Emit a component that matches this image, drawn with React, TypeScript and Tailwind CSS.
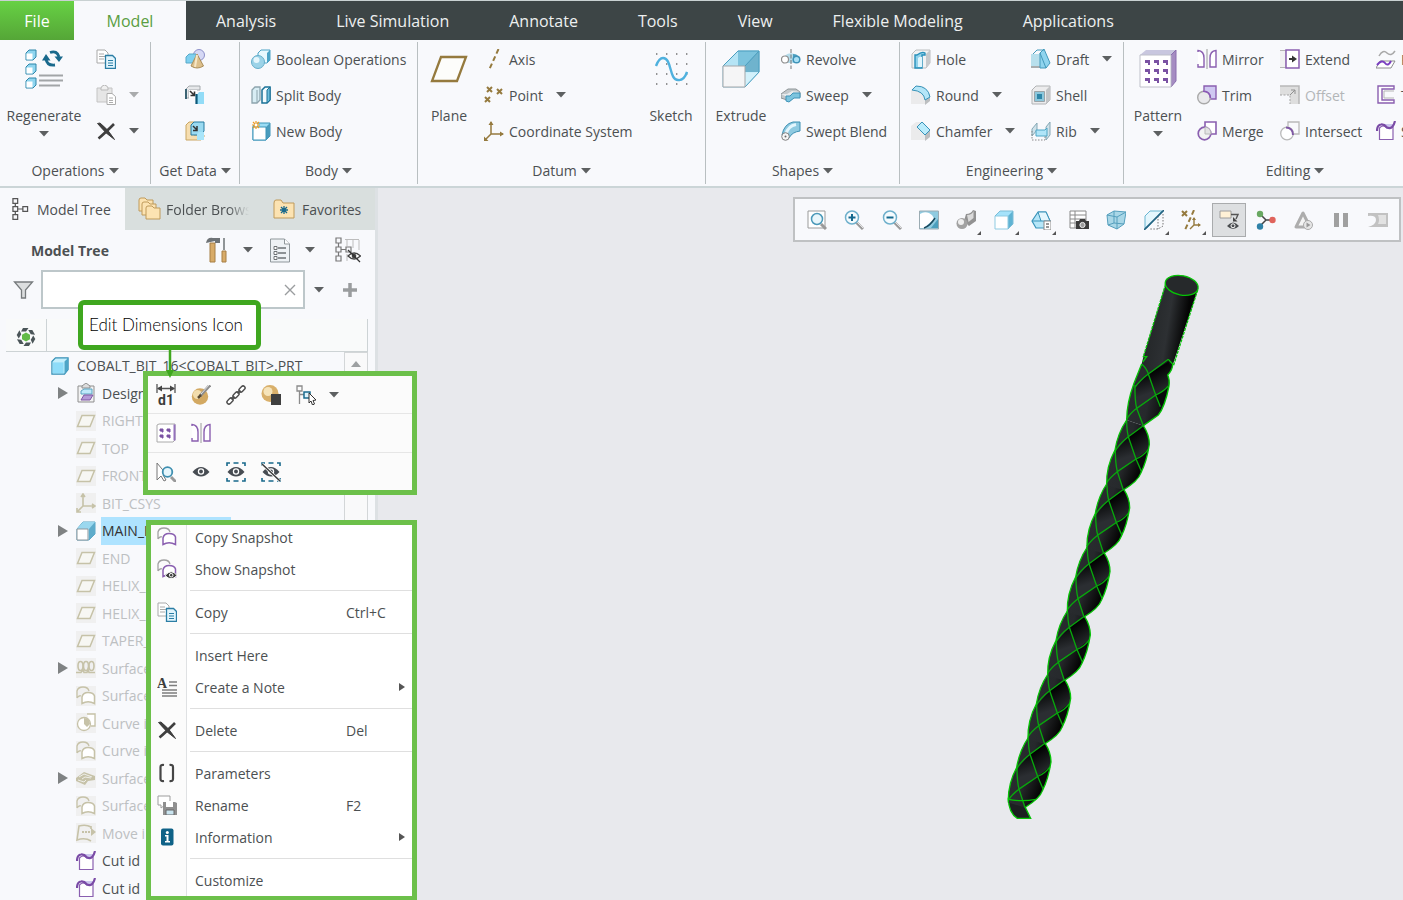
import React from 'react';

type Children = { children?: React.ReactNode };

/* ---------- Icons, all drawn on a 20 x 20 grid ---------- */

const BLUE = '#3f93b8';
const PURPLE = '#8a5fb0';
const BROWN = '#957a3e';
const KHAKI = '#c6c2a8';

const surface = (back: string, front: string) => (
  <>
    <path d="M1 12V5Q2 1 7 1Q12 1 13 5M1 12Q3 9 5 10" fill="none" stroke={back} strokeWidth="1.300" />
    <path d="M6 17V11Q7 6.500 12 6.500Q17.500 6.500 18.500 10V17.500Q12 14 6 17.500Z" fill="#fff" stroke={front} strokeWidth="1.500" />
  </>
);

const pages = (
  <>
    <path d="M1 1h8l3 3v10H1z" fill="#fff" stroke="#a9a9a9" />
    <path d="M3 5h5M3 7.500h6M3 10h5" stroke="#a9a9a9" />
    <path d="M9.500 6.500h7l3 3v10h-10z" fill="#e2f5fd" stroke="#2b7ea5" strokeWidth="1.300" />
    <path d="M12 11.500h5M12 14h5M12 16.500h5" stroke="#2b7ea5" />
  </>
);

const magnifier = (inner: React.ReactNode) => (
  <>
    <path d="M12 12l7 7" stroke="#9a9a9a" strokeWidth="3" />
    <path d="M13 12l6 6" stroke="#e4e4e4" strokeWidth="1" />
    <circle cx="8" cy="7.500" r="6.500" fill="#f5fbfe" stroke="#6fb0cc" strokeWidth="1.500" />
    {inner}
  </>
);

const eye = (
  <>
    <path d="M1.500 10Q10 0 18.500 10Q10 19 1.500 10Z" fill="#474c52" />
    <circle cx="10" cy="9.500" r="3.200" fill="#fff" />
    <circle cx="10" cy="9.500" r="1.900" fill="#474c52" />
  </>
);

const selectionFrame = (
  <path d="M1 4V1h3M7.500 1h5M16 1h3v3M19 16v3h-3M12.500 19h-5M4 19H1v-3" fill="none" stroke="#19698c" strokeWidth="1.600" />
);

const mirror = (
  <>
    <path d="M1 3V1.500Q7 2 7 9V18H1V15" fill="#fff" stroke={PURPLE} strokeWidth="1.400" />
    <path d="M19 1.500Q13 2 13 9V18H19z" fill="#fff" stroke={PURPLE} strokeWidth="1.400" />
    <path d="M10 0v20" stroke="#9a9a9a" />
  </>
);

const solidify = (
  <>
    <path d="M3.500 7Q7 3 11 7Q14 8 17 4V18.500H3.500z" fill="#fff" stroke={PURPLE} strokeWidth="1.200" />
    <path d="M7 3h10l-2 4-4 1z" fill="#ccc6ee" />
    <path d="M1 10Q1 4 5 3.500Q8 3 11 6.500Q17 9 19 0" fill="none" stroke="#7a4ba6" strokeWidth="2.200" />
  </>
);

const cube = (
  <>
    <path d="M1 6l5-5h13v13l-5 5H1z" fill="#a5e3fb" />
    <path d="M14 6l5-5v13l-5 5z" fill="#5fb3d3" />
    <path d="M1 6h13v13H1z" fill="#fff" stroke="#8fcbe2" />
    <path d="M1 6l5-5h13v13l-5 5" fill="none" stroke="#7cbdd6" />
  </>
);

const icons: Record<string, React.ReactNode> = {
  copy: pages,
  paste: (
    <>
      <path d="M1 3h15v14H1z" fill="#e6e6e6" stroke="#c4c4c4" />
      <path d="M5 3Q5 1 8.500 0Q12 1 12 3v2H5z" fill="#f0f0f0" stroke="#b9b9b9" />
      <path d="M11 8.500h5l3.500 3v8H11z" fill="#fff" stroke="#adadad" />
      <path d="M13 13h4M13 15.500h4M13 17.500h4" stroke="#adadad" />
    </>
  ),
  delete: (
    <>
      <path d="M1.500 2.500L4 2Q12 8 18.500 18.500Q10 13 1.500 2.500z" fill="#3f3f3f" stroke="#3f3f3f" />
      <path d="M2.500 17.500Q9 12 18 3" fill="none" stroke="#3f3f3f" strokeWidth="2.600" />
    </>
  ),
  shapes: (
    <>
      <circle cx="14" cy="6" r="5.500" fill="#d5d8f5" stroke="#8d90c8" />
      <path d="M1 8l3-3h7v9H1z" fill="#7fd0f0" stroke="#58a9c8" />
      <path d="M12 5L6 17Q12 21 18.500 17z" fill="#dcbf8b" stroke="#a98d59" />
      <path d="M12 6l-2 12" stroke="#f6e7c6" strokeWidth="2" />
    </>
  ),
  copyGeom: (
    <>
      <path d="M1 4L4 1h11v4H4v8H1z" fill="#e6e8ea" stroke="#a6abae" />
      <path d="M1 4v10" stroke="#3b6373" strokeWidth="2" />
      <path d="M4 5h8v8H4z" fill="#fff" />
      <path d="M5 6l4 4M9.500 6.500v4h-4" fill="none" stroke="#333" strokeWidth="1.600" />
      <path d="M12 10l2-3h5v12h-8z" fill="#92dcf7" />
      <path d="M11.500 9v10" stroke="#0d5878" strokeWidth="2.200" />
    </>
  ),
  shrinkwrap: (
    <>
      <path d="M1 4l3-3h5v13h10v2l-3 3H1z" fill="#f6deb0" stroke="#c9a662" />
      <path d="M6 4l3-3h10v9l-3 4H6z" fill="#9adaf1" stroke="#267a9f" />
      <path d="M8 5l4 4M12 5v4.500H8" fill="none" stroke="#333" strokeWidth="1.500" />
      <path d="M12 13l2-2h5v8h-7z" fill="#a8e5fa" />
    </>
  ),
  boolean: (
    <>
      <path d="M7 4l3-3h9v10l-3 3H7z" fill="#e8f8fe" stroke="#4ca3c6" />
      <path d="M16 4l3-3v10l-3 3z" fill="#4ca3c6" />
      <circle cx="7" cy="13" r="6.500" fill="#9cd3e8" stroke="#65aeca" />
      <circle cx="5.500" cy="11" r="3" fill="#e5f6fc" />
    </>
  ),
  split: (
    <>
      <path d="M1 5l3-3h5v13l-3 3H1z" fill="#d8edf4" stroke="#8da4ad" strokeWidth="1.300" />
      <path d="M6 5v13" stroke="#8da4ad" />
      <path d="M11 5l3-3h5v13l-3 3h-5z" fill="#f2fbfe" stroke="#1a7196" strokeWidth="1.500" />
      <path d="M16 5l3-3v13l-3 3z" fill="#6fbfdc" stroke="#1a7196" />
    </>
  ),
  newBody: (
    <>
      <path d="M2 5l4-3h13v13l-4 4H2z" fill="#9bdcf4" stroke="#3d96ba" />
      <path d="M15 6l4-4v13l-4 4z" fill="#4a9cbd" />
      <path d="M2 6h13v13H2z" fill="#fff" stroke="#3d96ba" />
      <path d="M5 0v8M1 4h8M2 1l6 6M8 1L2 7" stroke="#f39a1e" strokeWidth="1.200" />
      <circle cx="5" cy="4" r="1.400" fill="#fff" />
    </>
  ),
  axis: <path d="M14.500 0L5.500 20" stroke={BROWN} strokeWidth="2" strokeDasharray="5 3" />,
  point: (
    <path d="M3 2l5 5M8 2L3 7M13 4l5 5M18 4l-5 5M1 12l5 5M6 12l-5 5" stroke={BROWN} strokeWidth="2" />
  ),
  csys: (
    <>
      <path d="M7 1v12h12M7 13l-6 6" fill="none" stroke={BROWN} strokeWidth="1.500" />
      <path d="M4.500 4L7 0l2.500 4zM16 10.500l4 2.500-4 2.500zM0 15.500V20h4.500z" fill={BROWN} />
    </>
  ),
  revolve: (
    <>
      <path d="M4 6.500Q10 2 16 6.500V14H4z" fill="#b4dceb" />
      <path d="M12 5Q16 5 17 7v6h-5z" fill="#4c9fc0" />
      <circle cx="4" cy="10.500" r="3.500" fill="#fff" stroke="#8f8f8f" strokeWidth="1.200" />
      <circle cx="15.500" cy="10.500" r="3.300" fill="#a9e0f5" stroke={BLUE} strokeWidth="1.500" />
      <path d="M10 0v20" stroke="#777" strokeDasharray="4 1.500" />
    </>
  ),
  sweep: (
    <>
      <path d="M0 9L7 4h8l4 3v5h-6l-4 4L0 13z" fill="#c3c8cb" stroke="#8e9598" />
      <path d="M0 9h6l5-3 8 1-7 3-4 3z" fill="#e8ebed" />
      <path d="M9 11l3-3h7v5h-6l-5 4-3-1v-5z" fill="#7cc4de" stroke={BLUE} />
    </>
  ),
  sweptBlend: (
    <>
      <path d="M1 14Q3 3 12 1h7v9Q11 11 8 17z" fill="#8ecae1" stroke="#3d8fb2" />
      <path d="M5 13Q7 5 15 3.500" fill="none" stroke="#e4f6fd" strokeWidth="3" />
      <circle cx="4.500" cy="15.500" r="3.800" fill="#f6f6f6" stroke="#808080" />
      <circle cx="4.500" cy="15.500" r="1" fill="#666" />
    </>
  ),
  hole: (
    <>
      <path d="M1 5l4-4h14v13l-4 5H1z" fill="#f1f2f3" stroke="#bcbec0" />
      <path d="M15 5l4-4v13l-4 5z" fill="#c6c9cc" />
      <path d="M6 6Q11 2 14 4v2h-3v13H4V6z" fill="#90d1ea" stroke="#2790ba" strokeWidth="1.400" />
      <path d="M7 9Q9 7 11 8v10H7z" fill="#dff5fd" />
    </>
  ),
  round: (
    <>
      <path d="M0 5L5 1h7l7 8v6l-5 4H0z" fill="#ebebec" />
      <path d="M14 13l5-4v7l-5 4z" fill="#bcbec0" />
      <path d="M1 5L5 1Q17 1 19 12l-5 3Q13 6 1 5z" fill="#b4e6f8" stroke="#3893b9" />
    </>
  ),
  chamfer: (
    <>
      <path d="M0 5L5 1h7l7 8v6l-5 4H0z" fill="#ebebec" />
      <path d="M14 13l5-4v7l-5 4z" fill="#bcbec0" />
      <path d="M6 6l5-5 8 8-5 5z" fill="#baecfc" stroke="#3893b9" />
    </>
  ),
  draft: (
    <>
      <path d="M0 5h12v14H0z" fill="#b8dfec" />
      <path d="M0 17h16v2H0z" fill="#a9adaf" />
      <path d="M9 4l4-4 6 14-4 5H9z" fill="#8fd4ee" stroke="#4399bb" />
      <path d="M9 4l6 15M2 5l4-4h7" fill="none" stroke="#4399bb" />
    </>
  ),
  shell: (
    <>
      <path d="M1 5l4-4h14v14l-4 4H1z" fill="#ececed" stroke="#b1b3b5" />
      <path d="M15 5l4-4v14l-4 4z" fill="#c3c5c7" />
      <path d="M3.500 6.500h10v10h-10z" fill="#8cc7dc" stroke="#9aa3a7" />
      <path d="M6 9h5v5H6z" fill="#2d86a8" />
    </>
  ),
  rib: (
    <>
      <path d="M1 8l5-6v7l-5 6zM15 6l4-5v13l-4 5z" fill="#cfe2ea" stroke="#85a8b5" />
      <path d="M5 9h9l2-2v8H5z" fill="#b0e5f8" stroke="#4fa6c6" />
      <path d="M1 10v9h13v-5" fill="none" stroke="#8a8a8a" strokeDasharray="1.500 1.500" />
    </>
  ),
  mirror,
  trim: (
    <>
      <path d="M7 1h12v13H7z" fill="#cfc8f1" stroke={PURPLE} strokeWidth="1.400" />
      <circle cx="7" cy="12.500" r="6.300" fill="#e9e9ec" stroke="#a9a9a9" strokeWidth="1.400" />
      <path d="M6 6.200Q13 6 13.400 13" fill="none" stroke="#8b57b8" strokeWidth="1.600" />
    </>
  ),
  merge: (
    <>
      <path d="M8 6V1h11v12h-5" fill="#fff" stroke={PURPLE} strokeWidth="1.600" />
      <circle cx="7.500" cy="12.500" r="6.300" fill="#f3f3f3" stroke={PURPLE} strokeWidth="1.700" />
      <path d="M8 6q6 1 6 7H8z" fill="#e3e3e3" stroke="#b9b9b9" />
    </>
  ),
  extend: (
    <>
      <path d="M0 1.500h6v17H0" fill="#f1f1f2" stroke="#b5b5b5" />
      <path d="M6 1h13v18H6z" fill="#fff" stroke={PURPLE} strokeWidth="1.500" />
      <path d="M9 10h4" stroke="#333" strokeWidth="2" />
      <path d="M12 6.500l5 3.500-5 3.500z" fill="#333" />
    </>
  ),
  offset: (
    <>
      <path d="M0 1h19v18h-9v-9H0z" fill="#dedede" />
      <path d="M0 1h19v18" fill="none" stroke="#b8b8b8" strokeWidth="1.500" />
      <path d="M0 10h10v9" fill="none" stroke="#a3a3a3" strokeDasharray="2 1.500" />
      <path d="M10 10l5-5M11 5h4v4" fill="none" stroke="#909090" />
    </>
  ),
  intersect: (
    <>
      <path d="M8 6V1h11v12h-5" fill="none" stroke="#b9b9b9" strokeWidth="1.300" />
      <circle cx="7" cy="12.500" r="6.300" fill="#fff" stroke="#b9b9b9" strokeWidth="1.300" />
      <path d="M6 6.500Q13 7 13 14" fill="none" stroke="#7f57a5" strokeWidth="2" />
    </>
  ),
  project: (
    <>
      <path d="M3 7Q7 0 11 4T19 2" fill="none" stroke="#a8a8a8" strokeWidth="1.500" />
      <path d="M4 12h15l-4 7H0z" fill="#fff" stroke="#8d8d8d" />
      <path d="M1 16Q6 10 9 14T15 12" fill="none" stroke="#7a3fc0" strokeWidth="2" />
    </>
  ),
  thicken: (
    <>
      <path d="M18 1H2v17h16v-3H6V4h12z" fill="#fff" stroke={PURPLE} strokeWidth="1.400" />
      <path d="M18 6H8v7h10" fill="none" stroke="#b5b5b5" />
    </>
  ),
  solidify,
  refit: (
    <>
      <path d="M1 1h17v17H1z" fill="#fff" stroke="#9b9b9b" />
      <path d="M14 14l5 5" stroke="#9a9a9a" strokeWidth="3" />
      <circle cx="10" cy="9" r="5.500" fill="#e9f6fb" stroke="#4b99b9" strokeWidth="1.500" />
    </>
  ),
  zoomIn: magnifier(<path d="M8 4v7M4.500 7.500h7" stroke="#15698e" strokeWidth="2" />),
  zoomOut: magnifier(<path d="M4.500 7.500h7" stroke="#15698e" strokeWidth="2" />),
  repaint: (
    <>
      <path d="M.500 1h19v18H.500z" fill="#8fcbe0" stroke="#9bacb3" />
      <path d="M12 18l7-9v9z" fill="#4c9fbd" />
      <path d="M1 4Q5 1 10 3Q14 5 15 9L5 18H1z" fill="#fff" />
      <path d="M5 18Q11 16 16 8" fill="none" stroke="#1a4a5e" strokeWidth="1.500" />
    </>
  ),
  rendering: (
    <>
      <path d="M10 4Q15 4 17 0l3 1v10l-7 5-5-5z" fill="#929292" />
      <path d="M11 5Q16 5 17.500 1v7l-5 4z" fill="#dadada" />
      <circle cx="6" cy="13.500" r="5.500" fill="#a2a2a2" />
      <circle cx="5" cy="12" r="3" fill="#eee" />
    </>
  ),
  displayStyle: cube,
  savedViews: (
    <>
      <path d="M1 11l6-9h8l4 9-3 7H5z" fill="#b5e6f8" stroke="#3893b9" strokeWidth="1.200" />
      <path d="M7 2l3 9h9l-4-9zM1 11h9" fill="#e4f6fd" stroke="#3893b9" />
      <path d="M13 11h7v9h-7z" fill="#fff" stroke="#888" />
      <path d="M15 14h3M15 17h3" stroke="#777" strokeWidth="1.300" />
    </>
  ),
  viewManager: (
    <>
      <path d="M1 1h16v17H1zM1 5h16M1 9h16M1 13h16M6 1v17" fill="#fff" stroke="#8a8a8a" />
      <path d="M7 11h3l1-2h5l1 2h3v8H7z" fill="#3c3c3c" />
      <circle cx="13.500" cy="15" r="2.600" fill="#9b9b9b" stroke="#eee" />
    </>
  ),
  perspective: (
    <>
      <path d="M1 5L8 1l12 1-2 12-7 5L2 15z" fill="#a9d7e7" stroke="#559fbd" />
      <path d="M1 5l10 2 9-5M11 7v12M8 1v12L2 15M8 13l10 1" fill="none" stroke="#559fbd" />
    </>
  ),
  section: (
    <>
      <path d="M1 6l5-5h12L3 18H1z" fill="#e4f6fd" stroke="#68b5d1" />
      <path d="M19 4v12l-5 3H5M14 6v13" fill="none" stroke="#777" strokeDasharray="1.500 1.500" />
      <path d="M0 20L20 0" stroke="#256583" strokeWidth="1.700" />
    </>
  ),
  datumFilter: (
    <>
      <path d="M1 1l5 5M6 1L1 6" stroke={BROWN} strokeWidth="2" />
      <path d="M13 0L4 20" stroke={BROWN} strokeWidth="2" strokeDasharray="5 3" />
      <path d="M13 8v7h6M13 15l-4 4" fill="none" stroke={BROWN} strokeWidth="1.400" />
      <path d="M11 10l2-3 2 3zM17 13l3 2-3 2z" fill={BROWN} />
    </>
  ),
  annotation: (
    <>
      <path d="M1 1h11v7H1z" fill="#fff1d6" stroke="#9c9c9c" />
      <path d="M12 4.500h7L17 9" fill="none" stroke="#555" strokeWidth="1.400" />
      <path d="M14 7v4.500h4.500z" fill="#444" />
      <path d="M8 16Q14 9 20 16Q14 22 8 16z" fill="#4a4d50" />
      <circle cx="14" cy="15.800" r="2" fill="#4a4d50" stroke="#fff" />
    </>
  ),
  spinCenter: (
    <>
      <path d="M4 4l6 6h7M10 10l-6 6" fill="none" stroke="#444" strokeWidth="1.500" />
      <circle cx="4" cy="4" r="3.200" fill="#69a862" />
      <circle cx="4" cy="16.500" r="3.200" fill="#2f82a8" />
      <circle cx="16.500" cy="10" r="3.200" fill="#e0645c" />
    </>
  ),
  simulate: (
    <>
      <path d="M10 3L3 17h14z" fill="#f4f4f4" stroke="#adadad" strokeWidth="3" strokeLinejoin="round" />
      <circle cx="15" cy="15" r="4.500" fill="#e6e6e6" stroke="#aaa" />
      <path d="M13.500 12.500l4 2.500-4 2.500z" fill="#999" />
    </>
  ),
  pause: <path d="M3 3h5v14H3zM12 3h5v14h-5z" fill="#a0a0a0" />,
  stop: (
    <>
      <path d="M0 3h20v14H0q8-2 8-7T0 6z" fill="#c2c2c2" />
      <path d="M10 5h8v9h-8q2-4 0-9z" fill="#e2e2e2" />
    </>
  ),
  clipboard: (
    <>
      <path d="M2 3h16v16H2z" fill="#f2f2f2" stroke="#8f8f8f" />
      <path d="M6 3l4-3 4 3v2H6z" fill="#ddd" stroke="#8f8f8f" />
      <path d="M5 8l3-2h8v5H5z" fill="#bfe9fa" stroke="#5ba4c2" />
      <path d="M8 12h9l-3 5H5z" fill="#b59bd8" stroke="#7f57a5" />
    </>
  ),
  plane: <path d="M6 4.500h12.500L14 15.500H1.500z" fill="#f7f7f3" stroke={KHAKI} strokeWidth="1.500" />,
  csysOff: (
    <path d="M7 1v12h12M7 13l-6 6M5 4l2-3 2 3M16 11l3 2-3 2M1 15v4h4" fill="none" stroke={KHAKI} strokeWidth="1.600" />
  ),
  extrude: (
    <>
      <path d="M1 8l6-7h12v12l-6 6H1z" fill="#b8e6f7" stroke="#5aa5c3" />
      <path d="M7 1h12v12l-6 6V8z" fill="#5faccb" />
      <path d="M1 8l6-7h12l-6 7z" fill="#9bd8ef" />
      <path d="M1 8h11v11H1z" fill="#fff" stroke="#8e979c" />
    </>
  ),
  helix: (
    <g fill="none" stroke={KHAKI} strokeWidth="1.600">
      <ellipse cx="4.500" cy="8" rx="2.500" ry="4.500" />
      <ellipse cx="10" cy="8" rx="2.500" ry="4.500" />
      <ellipse cx="15.500" cy="8" rx="2.500" ry="4.500" />
      <path d="M0 14.500h5l2-3 1 3h3l1-3 1 3h6" />
    </g>
  ),
  surfaceOff: surface(KHAKI, KHAKI),
  curveOff: (
    <>
      <path d="M11 1h8v12h-4" fill="#fff" stroke={KHAKI} strokeWidth="1.300" />
      <circle cx="8" cy="11" r="6.500" fill="#fff" stroke={KHAKI} strokeWidth="1.300" />
      <path d="M8 5q6 0 6 6l-3 3-3-3z" fill={KHAKI} />
    </>
  ),
  sweepOff: (
    <>
      <path d="M0 10l8-6 11 4v4l-7 1-3 4-9-4z" fill={KHAKI} />
      <path d="M3 9l5-3 8 3M6 11l3-2 6 1M2 12l6 2 2-2" fill="none" stroke="#eeeee8" />
    </>
  ),
  moveOff: (
    <>
      <path d="M15 4Q10 1 3 3L1 17q8-3 14 1M15 3v3" fill="none" stroke={KHAKI} strokeWidth="1.600" />
      <path d="M6 9h10" stroke={KHAKI} strokeWidth="2" strokeDasharray="2 1" />
      <path d="M15 5l5 4-5 4z" fill={KHAKI} />
    </>
  ),
  appearance: (
    <>
      <circle cx="9" cy="11.500" r="8.200" fill="#d3a962" />
      <circle cx="6.500" cy="9.500" r="4.500" fill="#f2ddad" />
      <path d="M9 11L19 0" stroke="#8d8d8d" strokeWidth="3" />
      <path d="M10 9l8-9" stroke="#e2e2e2" />
      <path d="M7 13l3-3" stroke="#5b4a31" strokeWidth="2.500" />
    </>
  ),
  chain: (
    <g fill="#fff" stroke="#4d4d4d" strokeWidth="1.400">
      <rect x="-3.500" y="-2" width="7" height="4" rx="2" transform="translate(4 16) rotate(-45)" />
      <rect x="-3.500" y="-2" width="7" height="4" rx="2" transform="translate(10 10) rotate(-45)" />
      <rect x="-3.500" y="-2" width="7" height="4" rx="2" transform="translate(16 4) rotate(-45)" />
      <path d="M5.500 14.500l3-3M11.500 8.500l3-3" strokeWidth="1.800" />
    </g>
  ),
  sphereBox: (
    <>
      <circle cx="9" cy="8.500" r="8.500" fill="#d9b06b" />
      <circle cx="7" cy="6.500" r="4.500" fill="#f6e4ba" />
      <path d="M10 9h10v11H10z" fill="#3f3f3f" />
    </>
  ),
  selectTree: (
    <>
      <path d="M1 1h5v5H1zM3.500 6v13M3.500 9.500H8" fill="none" stroke="#8b8b8b" strokeWidth="1.300" />
      <path d="M8 7h6v6H8z" fill="#ddf3fc" stroke="#1c6c8e" strokeWidth="1.500" />
      <path d="M13 8l7 7-3 .500 1.500 3.500-2 1-1.500-4-2 2z" fill="#fff" stroke="#333" />
    </>
  ),
  pattern: (
    <>
      <path d="M1 2l2-1h16v16l-2 2H1z" fill="#fff" stroke="#aaa" />
      <path d="M18.500 1.500v16" stroke="#9471bc" strokeWidth="2" />
      <path d="M4 6h3v3H6V8H4zM11 6h3v3h-1V8h-2zM4 12h3v3H6v-1H4zM11 12h3v3h-1v-1h-2z" fill="#7a52a3" stroke="#7a52a3" />
    </>
  ),
  zoomSelected: (
    <>
      <path d="M1 1v17l4-4 3 5 2-1-3-5h4z" fill="#fff" stroke="#777" />
      <path d="M15 15l5 5" stroke="#999" strokeWidth="3" />
      <circle cx="11.500" cy="10" r="4.800" fill="#e6f6fc" stroke="#3f8fb0" strokeWidth="1.800" />
    </>
  ),
  eye,
  eyeFrame: <>{selectionFrame}{eye}</>,
  eyeOff: (
    <>
      {selectionFrame}
      {eye}
      <path d="M1 2l18 17" stroke="#fff" strokeWidth="3" />
      <path d="M1 2l18 17" stroke="#3c3c3c" strokeWidth="1.500" />
    </>
  ),
  snapshot: surface('#a2a2a2', PURPLE),
  snapshotShow: (
    <>
      {surface('#a2a2a2', PURPLE)}
      <path d="M8 16.500Q14.500 9 20 16.500Q14 23 8 16.500z" fill="#3f3f3f" stroke="#fff" />
      <circle cx="14.200" cy="16.200" r="1.800" fill="#3f3f3f" stroke="#fff" />
    </>
  ),
  note: (
    <>
      <text x="0" y="11" fontSize="14" fontWeight="700" fontFamily="Liberation Serif, serif" fill="#3c3c3c">A</text>
      <path d="M12 5h8M12 8.500h8M5 13h15M5 16h15M5 19h15" stroke="#7d7d7d" strokeWidth="1.300" />
    </>
  ),
  brackets: (
    <path d="M7 2Q3.500 1.500 3.500 4v12q0 2.500 3.500 2M12.500 2Q16 1.500 16 4v12q0 2.500-3.500 2" fill="none" stroke="#454545" strokeWidth="2.200" />
  ),
  rename: (
    <>
      <path d="M1 1h12v9H8l-4 3v-3H1z" fill="#fff" stroke="#9d9d9d" />
      <path d="M6 7h12l2 1v12H6z" fill="#8f8f8f" />
      <path d="M9 6h7v6H9z" fill="#fff" />
      <path d="M9 15h8v5H9z" fill="#c9e4ef" stroke="#666" />
    </>
  ),
  info: (
    <>
      <rect x="4" y="1.500" width="12.500" height="17" rx="2" fill="#0f6287" />
      <path d="M8 8h3.500v6H13v1.500H8V14h1.500V9.500H8z" fill="#fff" />
      <circle cx="10.300" cy="5.500" r="1.500" fill="#fff" />
    </>
  ),
};

const Icon = ({ name, off }: { name: string; off?: boolean }) => (
  <svg viewBox="0 0 20 20" className={`h-5 w-5 shrink-0 ${off ? 'bg-[#f0f0f0]' : ''}`} aria-hidden="true">
    {icons[name]}
  </svg>
);

const DimensionIcon = () => (
  <svg viewBox="0 0 20 22" className="h-[22px] w-5 shrink-0" aria-hidden="true">
    <path d="M1 0v9M19 0v9M2 4.500h16" stroke="#555" strokeWidth="1.300" />
    <path d="M1 4.500l5-3v6zM19 4.500l-5-3v6z" fill="#444" />
    <text x="2" y="21" fontSize="14" fontWeight="700" fontFamily="Roboto, sans-serif" fill="#3c3c3c">d1</text>
  </svg>
);

const Caret = ({ className = 'text-[#5d6061]' }: { className?: string }) => (
  <svg viewBox="0 0 10 6" className={`h-[6px] w-[10px] shrink-0 ${className}`} aria-hidden="true">
    <path d="M0 0h10L5 5.500z" fill="currentColor" />
  </svg>
);

/* ---------- Ribbon ---------- */

const tabs = ['Analysis', 'Live Simulation', 'Annotate', 'Tools', 'View', 'Flexible Modeling', 'Applications'];

const Group = ({ label, className, children }: Children & { label: string; className: string }) => (
  <section className={`flex shrink-0 flex-col pt-px ${className}`}>
    <div className="flex h-[108px]">{children}</div>
    <button className="flex h-[37px] items-center justify-center gap-1 pt-[6px]">
      {label}
      <Caret />
    </button>
  </section>
);

const Divider = () => <div className="my-[2px] w-px shrink-0 bg-[#b9bfc1]" />;

interface CommandProps {
  icon: string;
  label?: string;
  title?: string;
  caret?: boolean;
  disabled?: boolean;
}

const Command = ({ icon, label, title, caret, disabled }: CommandProps) => (
  <button
    aria-label={label ? undefined : title}
    disabled={disabled}
    className={`flex h-9 items-center gap-[5px] whitespace-nowrap ${disabled ? 'text-[#b3b6b8]' : ''}`}
  >
    <Icon name={icon} />
    {label}
    {caret && <span className="ml-2"><Caret className={disabled ? 'text-[#a9abac]' : 'text-[#5d6061]'} /></span>}
  </button>
);

const BigCommand = ({ label, caret, className, children }: Children & { label: string; caret?: boolean; className: string }) => (
  <button className={`flex h-full shrink-0 flex-col items-center pt-2 ${className}`}>
    <span className="flex h-10 items-center">{children}</span>
    <span className="mt-[17px] leading-5">{label}</span>
    {caret && <span className="pt-[5px]"><Caret /></span>}
  </button>
);

const RegenerateIcon = () => (
  <svg viewBox="0 0 38 40" className="h-10 w-[38px]" aria-hidden="true">
    {[1, 15, 29].map((y) => (
      <g key={y} transform={`translate(0 ${y})`}>
        <path d="M1 3l3-3h7v7l-3 3H1z" fill="#8fd5ef" stroke="#2f86aa" />
        <path d="M1.500 3.500h6v6h-6z" fill="#fff" />
      </g>
    ))}
    <path d="M25 3.500Q32 1 34 8M30 16Q22 17 21 10" fill="none" stroke="#19698c" strokeWidth="2.800" />
    <path d="M29.500 7.500H38L34 13zM17 11.500h8.500L21 5z" fill="#19698c" />
    <path d="M14 26.500h24M14 31.500h24M14 36.500h21" stroke="#a2a5a7" strokeWidth="2" />
  </svg>
);

const Ribbon = () => (
  <div className="flex h-[148px] shrink-0 overflow-hidden border-b-2 border-[#cbd5d7] bg-[#f8f9fc]">
    <Group label="Operations" className="w-[150px]">
      <BigCommand label="Regenerate" caret className="w-[88px]"><RegenerateIcon /></BigCommand>
      <div className="flex flex-col pl-2">
        <Command icon="copy" title="Copy" />
        <Command icon="paste" title="Paste" caret disabled />
        <Command icon="delete" title="Delete" caret />
      </div>
    </Group>
    <Divider />
    <Group label="Get Data" className="w-[88px]">
      <div className="flex w-full flex-col items-center">
        <Command icon="shapes" title="User-Defined Feature" />
        <Command icon="copyGeom" title="Copy Geometry" />
        <Command icon="shrinkwrap" title="Shrinkwrap" />
      </div>
    </Group>
    <Divider />
    <Group label="Body" className="w-[177px]">
      <div className="flex flex-col pl-[11px]">
        <Command icon="boolean" label="Boolean Operations" />
        <Command icon="split" label="Split Body" />
        <Command icon="newBody" label="New Body" />
      </div>
    </Group>
    <Divider />
    <Group label="Datum" className="w-[287px]">
      <BigCommand label="Plane" className="w-[62px]">
        <svg viewBox="0 0 38 30" className="h-[30px] w-[38px]" aria-hidden="true">
          <path d="M11 3h25L27 27H2z" fill="#fdfdfb" stroke={BROWN} strokeWidth="2.300" />
        </svg>
      </BigCommand>
      <div className="flex w-[157px] flex-col pl-1">
        <Command icon="axis" label="Axis" />
        <Command icon="point" label="Point" caret />
        <Command icon="csys" label="Coordinate System" />
      </div>
      <BigCommand label="Sketch" className="w-[68px]">
        <svg viewBox="0 0 34 34" className="h-[34px] w-[34px]" aria-hidden="true">
          <path d="M2 2h32M2 12h32M2 22h32M2 32h32" stroke="#707070" strokeWidth="1.400" strokeDasharray="1.400 8.600" />
          <path d="M2 14Q5 6 9 6C18 6 15 28 24 28Q30 29 33 20" fill="none" stroke="#4fb1de" strokeWidth="2.400" />
        </svg>
      </BigCommand>
    </Group>
    <Divider />
    <Group label="Shapes" className="w-[193px]">
      <BigCommand label="Extrude" className="w-[70px]">
        <svg viewBox="0 0 38 40" className="h-10 w-[38px]" aria-hidden="true">
          <path d="M1 17L16 2h21v21L23 38H1z" fill="#c9eefb" stroke="#8bc5db" />
          <path d="M16 2h21v21H23v-6l-7-15z" fill="#62aecb" />
          <path d="M1 17L16 2v15z" fill="#b5e4f5" />
          <path d="M16 2h21L23 17h-7z" fill="#7cc3dd" />
          <path d="M23 17L37 2v21H23z" fill="#6fb3cd" />
          <path d="M23 24h14L23 38z" fill="#d3f1fb" />
          <path d="M1 17L16 2h21L23 17M37 2v21L23 38" fill="none" stroke="#4b9ebf" />
          <path d="M1 17h22v21H1z" fill="#f5f5f6" stroke="#a3a7aa" />
        </svg>
      </BigCommand>
      <div className="flex flex-col pl-[5px]">
        <Command icon="revolve" label="Revolve" />
        <Command icon="sweep" label="Sweep" caret />
        <Command icon="sweptBlend" label="Swept Blend" />
      </div>
    </Group>
    <Divider />
    <Group label="Engineering" className="w-[223px]">
      <div className="flex w-[131px] shrink-0 flex-col pl-[11px]">
        <Command icon="hole" label="Hole" />
        <Command icon="round" label="Round" caret />
        <Command icon="chamfer" label="Chamfer" caret />
      </div>
      <div className="flex flex-col">
        <Command icon="draft" label="Draft" caret />
        <Command icon="shell" label="Shell" />
        <Command icon="rib" label="Rib" caret />
      </div>
    </Group>
    <Divider />
    <Group label="Editing" className="w-[342px]">
      <BigCommand label="Pattern" caret className="w-[68px]">
        <svg viewBox="0 0 38 40" className="h-10 w-[38px]" aria-hidden="true">
          <path d="M1 6l6-5h30l-5 5z" fill="#c9c7df" />
          <path d="M32 6l5-5v31l-5 6z" fill="#a58cc2" stroke="#8a6fae" />
          <path d="M1 6h31v32H1z" fill="#fff" stroke="#bfc0ca" />
          {[11, 20, 29].map((y) => (
            <path key={y} d={`M6 ${y}h5v5H9v-2H6zM15 ${y}h5v5h-2v-2h-3zM24 ${y}h5v5h-2v-2h-3z`} fill="#7a52a3" />
          ))}
        </svg>
      </BigCommand>
      <div className="flex w-[88px] shrink-0 flex-col pl-[5px]">
        <Command icon="mirror" label="Mirror" />
        <Command icon="trim" label="Trim" />
        <Command icon="merge" label="Merge" />
      </div>
      <div className="flex w-[96px] shrink-0 flex-col">
        <Command icon="extend" label="Extend" />
        <Command icon="offset" label="Offset" disabled />
        <Command icon="intersect" label="Intersect" />
      </div>
      <div className="flex flex-col">
        <Command icon="project" label="Project" />
        <Command icon="thicken" label="Thicken" />
        <Command icon="solidify" label="Solidify" />
      </div>
    </Group>
  </div>
);

/* ---------- Model tree ---------- */

interface TreeItem {
  icon: string;
  label: string;
  off?: boolean;
  expand?: boolean;
  selected?: boolean;
}

const treeItems: TreeItem[] = [
  { icon: 'clipboard', label: 'Design', expand: true },
  { icon: 'plane', label: 'RIGHT', off: true },
  { icon: 'plane', label: 'TOP', off: true },
  { icon: 'plane', label: 'FRONT', off: true },
  { icon: 'csysOff', label: 'BIT_CSYS', off: true },
  { icon: 'extrude', label: 'MAIN_B', expand: true, selected: true },
  { icon: 'plane', label: 'END', off: true },
  { icon: 'plane', label: 'HELIX_S', off: true },
  { icon: 'plane', label: 'HELIX_S', off: true },
  { icon: 'plane', label: 'TAPER_', off: true },
  { icon: 'helix', label: 'Surface', off: true, expand: true },
  { icon: 'surfaceOff', label: 'Surface', off: true },
  { icon: 'curveOff', label: 'Curve i', off: true },
  { icon: 'surfaceOff', label: 'Curve i', off: true },
  { icon: 'sweepOff', label: 'Surface', off: true, expand: true },
  { icon: 'surfaceOff', label: 'Surface', off: true },
  { icon: 'moveOff', label: 'Move i', off: true },
  { icon: 'solidify', label: 'Cut id' },
  { icon: 'solidify', label: 'Cut id' },
];

const TreeRow = ({ icon, label, off, expand, selected }: TreeItem) => (
  <li className="flex min-h-0 flex-1 items-center">
    <span className="w-[70px] shrink-0 pl-[52px]">
      {expand && (
        <svg viewBox="0 0 10 12" className="h-3 w-[10px]" aria-hidden="true">
          <path d="M0 0l10 6-10 6z" fill="#7f8283" />
        </svg>
      )}
    </span>
    <Icon name={icon} off={off} />
    <span
      className={`ml-[5px] flex h-full items-center pl-px ${selected ? 'w-[130px] bg-[#aee3ff] text-[#333]' : ''} ${off ? 'text-[#bdc0c2]' : ''}`}
    >
      {label}
    </span>
  </li>
);

const Folder = ({ x, y }: { x: number; y: number }) => (
  <path d={`M${x} ${y + 2}q0-2 2-2h4l2 2h6v11H${x}z`} fill="#fce3b2" stroke="#bf9a5b" />
);

const ModelTree = () => (
  <aside className="flex w-[378px] shrink-0 flex-col overflow-hidden border-r-[3px] border-[#dde1e4] bg-[#f8f9fc]">
    <div className="-mr-[3px] flex h-[42px] shrink-0 bg-[#d9dfde]">
      <button className="flex w-[125px] items-center gap-2 whitespace-nowrap bg-[#f8f9fc] pl-3">
        <svg viewBox="0 0 18 24" className="h-6 w-[17px] shrink-0" fill="none" stroke="#555" strokeWidth="1.300" aria-hidden="true">
          <path d="M1 1h5v5H1zM1 9.500h5v5H1zM1 18h5v5H1zM11.500 9.500h5v5h-5zM3.500 6v3.500M3.500 14.500V18M6 12h5.500" />
        </svg>
        Model Tree
      </button>
      <button className="ml-[13px] flex w-[111px] items-center gap-1 overflow-hidden whitespace-nowrap">
        <svg viewBox="0 0 24 24" className="h-6 w-6 shrink-0" aria-hidden="true">
          <Folder x={1} y={1} />
          <Folder x={4} y={5} />
          <Folder x={8} y={9} />
        </svg>
        <span className="overflow-hidden mask-r-from-75%">Folder Browser</span>
      </button>
      <button className="ml-6 flex items-center gap-[7px]">
        <svg viewBox="0 0 22 20" className="h-5 w-[22px]" aria-hidden="true">
          <path d="M1 4q0-3 2-3h5l2 3h11v15H1z" fill="#fce3b2" stroke="#bf9a5b" />
          <path d="M11 7v8M7 11h8M8 8l6 6M14 8l-6 6" stroke="#19698c" strokeWidth="1.300" />
        </svg>
        Favorites
      </button>
    </div>

    <div className="flex h-10 shrink-0 items-center">
      <h2 className="w-[206px] pl-[31px] font-bold">Model Tree</h2>
      <button aria-label="Settings" className="flex items-center gap-[15px]">
        <svg viewBox="0 0 22 26" className="h-[26px] w-[22px]" aria-hidden="true">
          <path d="M0 6Q1 0 7 1h7v5H9V4z" fill="#6e7376" />
          <path d="M4 6h5v19H4z" fill="#d8ab68" stroke="#a67f44" />
          <path d="M18 1v12" stroke="#6e7376" strokeWidth="1.500" />
          <path d="M16 14h4v11h-4z" fill="#d8ab68" stroke="#a67f44" />
        </svg>
        <Caret />
      </button>
      <button aria-label="Show" className="ml-[17px] flex items-center gap-[15px]">
        <svg viewBox="0 0 20 25" className="h-[25px] w-5" aria-hidden="true">
          <path d="M.500 1h14l5 5v18H.500z" fill="#eef2f5" stroke="#8f979b" />
          <path d="M14.500 1v5h5" fill="#fff" stroke="#8f979b" />
          <path d="M8 10h8M8 15h8M8 20h8" stroke="#6e7376" strokeWidth="1.300" />
          <path d="M4 8.500h3v3H4zM4 13.500h3v3H4zM4 18.500h3v3H4z" fill="#fff" stroke="#6e7376" />
        </svg>
        <Caret />
      </button>
      <button aria-label="Tree columns" className="ml-5">
        <svg viewBox="0 0 26 26" className="h-[26px] w-[26px]" fill="none" aria-hidden="true">
          <path d="M1 1h5v5H1zM1 10h5v5H1zM1 19h5v5H1zM11 10h5v5h-5zM3.500 6v4M3.500 15v4M6 12.500h5" stroke="#777" strokeWidth="1.200" />
          <path d="M10 2.500h14M12 3v6M18 3v8M24 3v10M12 17v7" stroke="#bdbdbd" />
          <path d="M13 19Q19 13 25.500 19Q19 25 13 19z" fill="#fff" stroke="#444" strokeWidth="1.300" />
          <circle cx="19" cy="19" r="2.300" fill="#444" />
          <path d="M13 13l12 12" stroke="#333" strokeWidth="1.300" />
        </svg>
      </button>
    </div>

    <div className="flex h-[39px] shrink-0 items-center">
      <svg viewBox="0 0 20 20" className="ml-[13px] h-5 w-[21px] shrink-0" aria-hidden="true">
        <path d="M1 2h18l-7 8v8H8v-8z" fill="#dcdedf" stroke="#777b7d" strokeWidth="1.300" />
      </svg>
      <div className="relative ml-[7px] h-[39px] w-[264px] shrink-0">
        <input aria-label="Filter" className="h-full w-full border-2 border-[#bdc7ca] bg-white pr-8 pl-2 outline-none" />
        <button aria-label="Clear" className="absolute inset-y-0 right-[9px]">
          <svg viewBox="0 0 12 12" className="h-3 w-3" aria-hidden="true">
            <path d="M1 1l10 10M11 1L1 11" stroke="#9a9d9f" strokeWidth="1.400" />
          </svg>
        </button>
      </div>
      <button aria-label="Filter options" className="ml-[9px]"><Caret /></button>
      <button aria-label="Add filter" className="ml-[19px]">
        <svg viewBox="0 0 14 14" className="h-[14px] w-[14px]" aria-hidden="true">
          <path d="M7 0v14M0 7h14" stroke="#9a9d9e" strokeWidth="3.500" />
        </svg>
      </button>
    </div>

    <div className="mt-[10px] mr-[7px] ml-[6px] flex h-[33px] shrink-0 items-center border-r border-b border-[#cdd3d5] bg-[#f9fafa]">
      <div className="flex h-full w-[41px] items-center justify-center border-r border-[#cdd3d5]">
        <svg viewBox="0 0 20 20" className="mt-1 h-5 w-5" aria-hidden="true">
          {[0, 60, 120, 180, 240, 300].map((a) => (
            <path key={a} d="M7 1h5.500L10 4.500H5z" fill="#4b5558" transform={`rotate(${a} 10 10)`} />
          ))}
          <path d="M10 5.500l4 2.300v4.400l-4 2.300-4-2.300V7.800z" fill="#62bb46" />
        </svg>
      </div>
    </div>

    <div className="mr-[7px] ml-[6px] flex h-[550px] shrink-0">
      <ul className="flex min-w-0 flex-1 flex-col whitespace-nowrap">
        <li className="flex min-h-0 flex-1 items-center gap-2 pl-[45px]">
          <svg viewBox="0 0 20 20" className="h-[18px] w-[18px] shrink-0" aria-hidden="true">
            <path d="M1 5l4-4h14v13l-4 5H1z" fill="#c5effc" stroke="#358fb5" strokeWidth="1.300" />
            <path d="M15 5l4-4v13l-4 5z" fill="#4da5c7" />
            <path d="M2 6h12v12H2z" fill="#8edcf9" />
          </svg>
          COBALT_BIT_16&lt;COBALT_BIT&gt;.PRT
        </li>
        {treeItems.map((item, i) => <TreeRow key={i} {...item} />)}
      </ul>
      <div className="w-6 shrink-0 border-x border-[#d3d6d8] bg-[#f9f9fa]">
        <button aria-label="Scroll up" className="flex h-6 w-full items-center justify-center border-t border-b border-[#d3d6d8]">
          <svg viewBox="0 0 10 6" className="h-[6px] w-[10px]" aria-hidden="true">
            <path d="M0 6h10L5 0z" fill="#9da0a2" />
          </svg>
        </button>
      </div>
    </div>
  </aside>
);

/* ---------- Graphics area ---------- */

const viewTools = [
  { icon: 'refit' },
  { icon: 'zoomIn' },
  { icon: 'zoomOut' },
  { icon: 'repaint' },
  { icon: 'rendering', more: true },
  { icon: 'displayStyle', more: true },
  { icon: 'savedViews', more: true },
  { icon: 'viewManager' },
  { icon: 'perspective' },
  { icon: 'section', more: true },
  { icon: 'datumFilter', more: true },
  { icon: 'annotation', active: true },
  { icon: 'spinCenter' },
  { icon: 'simulate' },
  { icon: 'pause' },
  { icon: 'stop' },
];

const ViewToolbar = () => (
  <div className="mt-[9px] mr-[2px] ml-auto flex h-[45px] w-[608px] items-center border-2 border-[#bfc1c3] bg-[#f8f9fc] pr-[2px] pl-[3px]">
    {viewTools.map(({ icon, more, active }) => (
      <div key={icon} className="flex flex-1 justify-center">
        <button
          aria-label={icon}
          className={`relative flex h-[34px] w-[34px] items-center justify-center ${active ? 'border border-[#a9abad] bg-[#dddfe1]' : ''}`}
        >
          <Icon name={icon} />
          {more && (
            <svg viewBox="0 0 4 4" className="absolute right-[2px] bottom-[2px] h-1 w-1" aria-hidden="true">
              <path d="M4 0v4H0z" fill="#555" />
            </svg>
          )}
        </button>
      </div>
    ))}
  </div>
);

const EDGE = '#06c406';
const CURVE = '#08a80c';

// one turn of the flutes, repeated down the axis of the bit
const Flute = () => (
  <>
    <path d="M440 480L490 497Q508 525 508 553Q500 605 482 640Q475 662 430 690L380 675Q378 620 405 570Q413 520 440 480Z" fill="url(#steel)" />
    <path d="M445 530L490 497Q508 525 508 553L503 570L468 597Z" fill="url(#shadow)" />
    <path d="M445 530L468 597L412 635L405 575Z" fill="url(#shade)" />
    <path d="M503 570L468 597L482 640Q498 605 503 570Z" fill="#08090a" />
    <path d="M468 597L482 640Q475 662 430 688L412 635Z" fill="url(#lobe)" />
    <g fill="none" stroke={CURVE} strokeWidth="4" strokeLinejoin="round">
      <path d="M490 497L445 530Q415 553 403 578" />
      <path d="M440 480Q440 510 445 530L468 597L484 634" />
      <path d="M505 568Q490 588 468 597L412 635Q390 652 380 668" />
      <path d="M406 572Q406 610 412 635L430 690" />
    </g>
    <g fill="none" stroke={EDGE} strokeWidth="4">
      <path d="M490 497Q508 525 508 553Q500 605 482 640Q475 662 430 690" />
      <path d="M440 480Q413 520 405 570Q378 620 380 675" />
    </g>
  </>
);

const DrillBit = () => (
  <svg viewBox="0 0 720 1710" className="absolute top-[72px] left-[602px] h-[570px] w-[240px]" role="img" aria-label="Cobalt bit">
    <defs>
      <linearGradient id="steel" x1="0" y1="0" x2="1" y2="0.300">
        <stop offset="0" stopColor="#2b2e31" />
        <stop offset="0.600" stopColor="#26292c" />
        <stop offset="1" stopColor="#070808" />
      </linearGradient>
      <linearGradient id="shank" x1="0" y1="0" x2="1" y2="0.250">
        <stop offset="0.250" stopColor="#25282a" />
        <stop offset="0.550" stopColor="#2d3033" />
        <stop offset="0.850" stopColor="#050505" />
      </linearGradient>
      <linearGradient id="shadow" x1="0.200" y1="0" x2="0.600" y2="1">
        <stop offset="0.200" stopColor="#000" />
        <stop offset="1" stopColor="#2b2f32" />
      </linearGradient>
      <linearGradient id="shade" x1="0.400" y1="0" x2="0.600" y2="1">
        <stop offset="0" stopColor="#050606" />
        <stop offset="0.600" stopColor="#2b2e32" />
      </linearGradient>
      <linearGradient id="lobe" x1="0" y1="0" x2="1" y2="0.500">
        <stop offset="0.100" stopColor="#2e3134" />
        <stop offset="0.900" stopColor="#060606" />
      </linearGradient>
    </defs>
    <path d="M85 1615Q86 1660 112 1675H152L134 1638L140 1620L135 1600Z" fill="#1c1f21" stroke={EDGE} strokeWidth="4" />
    {[5, 4, 3, 2, 1, 0].map((n) => (
      <g key={n} transform={`translate(${n * -59} ${n * 190.5})`}>
        <Flute />
      </g>
    ))}
    <path d="M85 1618Q125 1626 168 1618" fill="none" stroke={EDGE} strokeWidth="4" />
    <path d="M485 312L565 298L578 312Q578 330 563 345Q570 360 567 378Q555 440 535 465L490 497L440 480Q440 430 462 370Z" fill="url(#steel)" />
    <path d="M505 342L565 305L575 325L563 345L567 375L527 405Z" fill="url(#shadow)" />
    <path d="M505 342L527 405L470 445L466 380Z" fill="url(#shade)" />
    <path d="M567 378L527 405L540 445Q560 410 567 378Z" fill="#08090a" />
    <path d="M557 72L490 290L485 312L505 342Q530 318 565 298L578 316L653 90Z" fill="url(#shank)" />
    <g fill="none" stroke={EDGE} strokeWidth="4">
      <path d="M557 72L490 290M653 90L580 318" strokeDasharray="9 3" />
      <path d="M485 312L462 370Q440 430 440 480M565 298L578 312Q578 330 563 345Q570 360 567 378Q555 440 535 465L490 497" />
      <path d="M488 290h12l-12 16" />
    </g>
    <g fill="none" stroke={CURVE} strokeWidth="4">
      <path d="M565 298L505 342Q480 360 463 385M485 312Q500 325 505 342L527 405L541 440M565 378Q550 395 527 405L470 445Q450 460 440 478M465 375Q464 420 470 445L490 497" />
    </g>
    <ellipse cx="605" cy="76" rx="50" ry="29" transform="rotate(11 605 76)" fill="#26292b" stroke={EDGE} strokeWidth="4" />
  </svg>
);

/* ---------- Context menus ---------- */

const MiniToolbar = () => (
  <div className="absolute top-[371px] left-[143px] w-[274px] border-5 border-[#6cc04a] bg-[#fbfbfb]">
    <div className="flex h-[38px] items-center gap-[15px] border-b border-[#e6e6e6] pl-2">
      <button aria-label="Edit Dimensions"><DimensionIcon /></button>
      <button aria-label="Appearance"><Icon name="appearance" /></button>
      <button aria-label="Edit References"><Icon name="chain" /></button>
      <button aria-label="Suppress"><Icon name="sphereBox" /></button>
      <button aria-label="Select in tree" className="flex items-center gap-[13px]">
        <Icon name="selectTree" />
        <Caret />
      </button>
    </div>
    <div className="flex h-[39px] items-center gap-[15px] border-b border-[#e6e6e6] pl-2">
      <button aria-label="Pattern"><Icon name="pattern" /></button>
      <button aria-label="Mirror"><Icon name="mirror" /></button>
    </div>
    <div className="flex h-[37px] items-center gap-[15px] pl-2">
      <button aria-label="Zoom to Selected"><Icon name="zoomSelected" /></button>
      <button aria-label="Show"><Icon name="eye" /></button>
      <button aria-label="Show Only"><Icon name="eyeFrame" /></button>
      <button aria-label="Hide"><Icon name="eyeOff" /></button>
    </div>
  </div>
);

interface MenuEntry {
  label: string;
  icon?: string;
  keys?: string;
  submenu?: boolean;
}

const menuSections: MenuEntry[][] = [
  [{ label: 'Copy Snapshot', icon: 'snapshot' }, { label: 'Show Snapshot', icon: 'snapshotShow' }],
  [{ label: 'Copy', icon: 'copy', keys: 'Ctrl+C' }],
  [{ label: 'Insert Here' }, { label: 'Create a Note', icon: 'note', submenu: true }],
  [{ label: 'Delete', icon: 'delete', keys: 'Del' }],
  [
    { label: 'Parameters', icon: 'brackets' },
    { label: 'Rename', icon: 'rename', keys: 'F2' },
    { label: 'Information', icon: 'info', submenu: true },
  ],
  [{ label: 'Customize' }],
];

const ContextMenu = () => (
  <div className="absolute top-[520px] bottom-0 left-[146px] w-[271px] overflow-hidden border-5 border-b-4 border-[#6cc04a] bg-white">
    <div className="-mt-1">
      {menuSections.map((section, i) => (
        <div key={i}>
          {i > 0 && (
            <div className="flex h-[11px] items-center">
              <div className="h-full w-[36px] border-r border-[#dfe1e3] bg-[#fbfbfb]" />
              <div className="ml-[3px] h-px flex-1 bg-[#dfdfdf]" />
            </div>
          )}
          {section.map(({ label, icon, keys, submenu }) => (
            <button key={label} className="flex h-8 w-full items-center text-left">
              <span className="flex h-full w-[36px] items-center border-r border-[#dfe1e3] bg-[#fbfbfb] pl-[6px]">
                {icon && <Icon name={icon} />}
              </span>
              <span className="w-[159px] pl-[8px]">{label}</span>
              <span className="flex-1">{keys}</span>
              {submenu && (
                <svg viewBox="0 0 6 8" className="mr-[7px] h-2 w-[6px]" aria-hidden="true">
                  <path d="M0 0l6 4-6 4z" fill="#555" />
                </svg>
              )}
            </button>
          ))}
        </div>
      ))}
    </div>
  </div>
);

const Callout = () => (
  <div className="absolute top-[300px] left-[78px] flex w-[183px] flex-col items-center">
    <div className="flex h-[50px] w-full items-center rounded-md border-5 border-[#3fa71f] bg-white pl-[6px] font-['Lato'] text-[17px] font-light whitespace-nowrap text-black">
      Edit Dimensions Icon
    </div>
    <svg viewBox="0 0 10 28" className="h-7 w-[10px]" aria-hidden="true">
      <path d="M5 0v22" stroke="#3fa71f" strokeWidth="2.500" />
      <path d="M1 20h8l-4 8z" fill="#3fa71f" />
    </svg>
  </div>
);

const App: React.FC = () => {
  return (
    <div className="relative flex h-screen flex-col overflow-hidden bg-[#e8e9ed] font-['Open_Sans','Noto_Sans',sans-serif] text-[14px] text-[#4c5052]">
      <nav className="flex h-10 shrink-0 border-t border-[#c9d1d2] bg-[#3d4546] text-[16px] text-[#eef0f0]">
        <button className="w-[74px] shrink-0 bg-linear-to-b from-[#67d144] to-[#55a637] text-white">File</button>
        <button className="w-[112px] shrink-0 bg-[#f8f9fc] text-[#5a9e43]">Model</button>
        {tabs.map((tab) => (
          <button key={tab} className="shrink-0 px-[30px]">{tab}</button>
        ))}
      </nav>
      <Ribbon />
      <div className="flex min-h-0 flex-1">
        <ModelTree />
        <main className="relative flex min-w-0 flex-1 flex-col overflow-hidden">
          <ViewToolbar />
          <DrillBit />
        </main>
      </div>
      <MiniToolbar />
      <Callout />
      <ContextMenu />
    </div>
  );
};

export default App;
